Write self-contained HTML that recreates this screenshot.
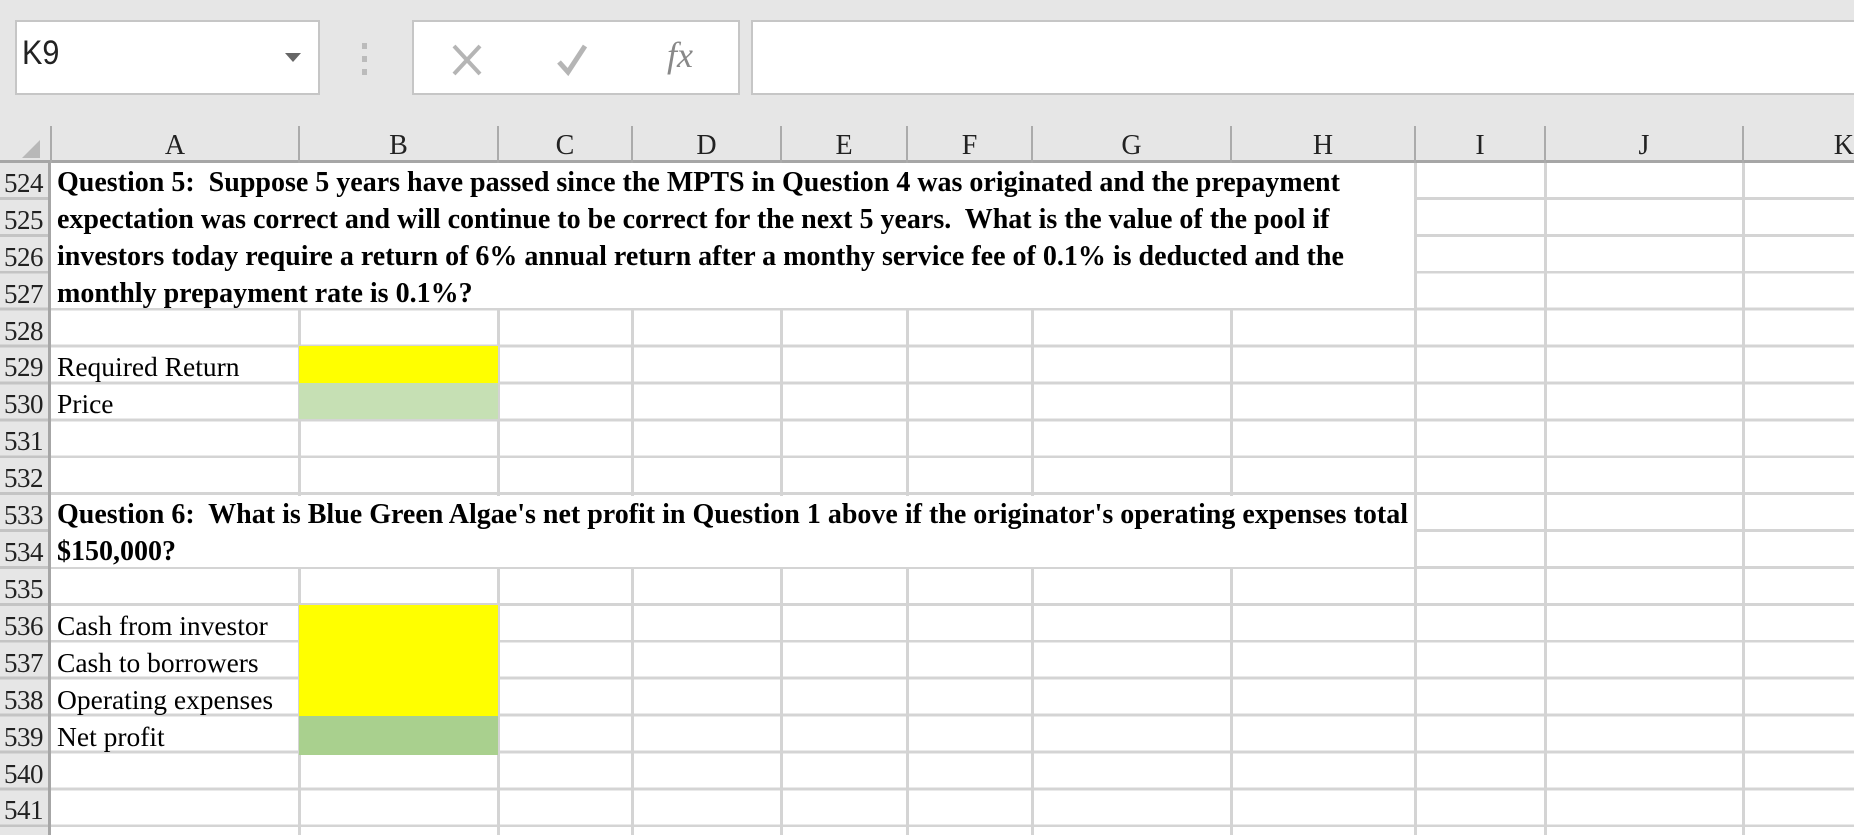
<!DOCTYPE html>
<html><head><meta charset="utf-8"><style>
*{margin:0;padding:0;box-sizing:border-box}
body{width:1854px;height:835px;background:#e6e6e6;position:relative;overflow:hidden;font-family:"Liberation Serif",serif;}
.a{position:absolute}
.box{position:absolute;background:#fff;border:2px solid #c6c6c6}
.v{position:absolute;width:3px;background:#d4d4d4;top:163px;height:672px}
.hv{position:absolute;width:2px;background:#ababab;top:126px;height:37px}
.ch{position:absolute;top:126px;height:37px;line-height:40px;text-align:center;font-size:28px;color:#222}
.rn{position:absolute;left:0;width:51px;height:37px;line-height:40px;font-size:27px;color:#222;padding-left:4px;letter-spacing:-0.5px}
.t{position:absolute;left:57px;height:37px;line-height:40px;font-size:27.5px;color:#000;white-space:nowrap}
.b{font-weight:bold;font-size:28px}
</style></head><body>
<div class="box" style="left:15px;top:20px;width:305px;height:75px"></div>
<div class="a" style="left:22px;top:34px;font-family:'Liberation Sans',sans-serif;font-size:34px;color:#222;transform:scaleX(0.9);transform-origin:left">K9</div>
<div class="a" style="left:285px;top:53px;width:0;height:0;border-left:8px solid transparent;border-right:8px solid transparent;border-top:9px solid #666"></div>
<div class="a" style="left:362px;top:43px;width:5px;height:6px;background:#bbb"></div>
<div class="a" style="left:362px;top:56px;width:5px;height:6px;background:#bbb"></div>
<div class="a" style="left:362px;top:69px;width:5px;height:6px;background:#bbb"></div>
<div class="box" style="left:412px;top:20px;width:328px;height:75px"></div>
<svg class="a" style="left:450px;top:42px" width="36" height="36"><path d="M4 4L30 32M30 4L4 32" stroke="#b5b5b5" stroke-width="4"/></svg>
<svg class="a" style="left:555px;top:42px" width="36" height="36"><path d="M4 20L13 30L30 4" stroke="#b5b5b5" stroke-width="5" fill="none"/></svg>
<div class="a" style="left:667px;top:34px;font-size:36px;font-style:italic;color:#888">fx</div>
<div class="box" style="left:751px;top:20px;width:1110px;height:75px"></div>
<div class="a" style="left:51px;top:163px;width:1803px;height:672px;background:#fff repeating-linear-gradient(to bottom,transparent 0 34px,#d4d4d4 34px 36.9px)"></div>
<div class="v" style="left:298px"></div><div class="v" style="left:497px"></div><div class="v" style="left:631px"></div><div class="v" style="left:780px"></div><div class="v" style="left:906px"></div><div class="v" style="left:1031px"></div><div class="v" style="left:1230px"></div><div class="v" style="left:1414px"></div><div class="v" style="left:1544px"></div><div class="v" style="left:1742px"></div>
<div class="a" style="left:51px;top:163px;width:1363px;height:145px;background:#fff"></div>
<div class="a" style="left:51px;top:496px;width:1363px;height:71px;background:#fff"></div>
<div class="a" style="left:299px;top:346px;width:199px;height:37px;background:#ffff00"></div>
<div class="a" style="left:299px;top:383px;width:199px;height:36px;background:#c6e0b4"></div>
<div class="a" style="left:299px;top:605px;width:199px;height:111px;background:#ffff00"></div>
<div class="a" style="left:299px;top:716px;width:199px;height:39px;background:#a9d08e"></div>
<div class="a" style="left:0;top:126px;width:1854px;height:37px;background:#e6e6e6;border-bottom:3px solid #a6a6a6"></div>
<div class="a" style="left:0;top:163px;width:51px;height:672px;background:#e6e6e6;border-right:3px solid #a6a6a6;background-image:repeating-linear-gradient(to bottom,transparent 0 34px,#c4c4c4 34px 36.9px)"></div>
<div class="a" style="left:22px;top:140px;width:0;height:0;border-left:18px solid transparent;border-bottom:18px solid #b8b8b8"></div>
<div class="hv" style="left:50px"></div><div class="hv" style="left:298px"></div><div class="hv" style="left:497px"></div><div class="hv" style="left:631px"></div><div class="hv" style="left:780px"></div><div class="hv" style="left:906px"></div><div class="hv" style="left:1031px"></div><div class="hv" style="left:1230px"></div><div class="hv" style="left:1414px"></div><div class="hv" style="left:1544px"></div><div class="hv" style="left:1742px"></div>
<div class="ch" style="left:51px;width:248px">A</div>
<div class="ch" style="left:299px;width:199px">B</div>
<div class="ch" style="left:498px;width:134px">C</div>
<div class="ch" style="left:632px;width:149px">D</div>
<div class="ch" style="left:781px;width:126px">E</div>
<div class="ch" style="left:907px;width:125px">F</div>
<div class="ch" style="left:1032px;width:199px">G</div>
<div class="ch" style="left:1231px;width:184px">H</div>
<div class="ch" style="left:1415px;width:130px">I</div>
<div class="ch" style="left:1545px;width:198px">J</div>
<div class="ch" style="left:1743px;width:111px;text-align:right">K</div>
<div class="rn" style="top:163px">524</div><div class="rn" style="top:200px">525</div><div class="rn" style="top:237px">526</div><div class="rn" style="top:274px">527</div><div class="rn" style="top:311px">528</div><div class="rn" style="top:347px">529</div><div class="rn" style="top:384px">530</div><div class="rn" style="top:421px">531</div><div class="rn" style="top:458px">532</div><div class="rn" style="top:495px">533</div><div class="rn" style="top:532px">534</div><div class="rn" style="top:569px">535</div><div class="rn" style="top:606px">536</div><div class="rn" style="top:643px">537</div><div class="rn" style="top:680px">538</div><div class="rn" style="top:717px">539</div><div class="rn" style="top:754px">540</div><div class="rn" style="top:790px">541</div>
<div class="t b" style="top:163px">Question 5:&nbsp; Suppose 5 years have passed since the MPTS in Question 4 was originated and the prepayment</div>
<div class="t b" style="top:200px">expectation was correct and will continue to be correct for the next 5 years.&nbsp; What is the value of the pool if</div>
<div class="t b" style="top:237px">investors today require a return of 6% annual return after a monthy service fee of 0.1% is deducted and the</div>
<div class="t b" style="top:274px">monthly prepayment rate is 0.1%?</div>
<div class="t" style="top:347px">Required Return</div>
<div class="t" style="top:384px">Price</div>
<div class="t b" style="top:495px">Question 6:&nbsp; What is Blue Green Algae's net profit in Question 1 above if the originator's operating expenses total</div>
<div class="t b" style="top:532px">$150,000?</div>
<div class="t" style="top:606px">Cash from investor</div>
<div class="t" style="top:643px">Cash to borrowers</div>
<div class="t" style="top:680px">Operating expenses</div>
<div class="t" style="top:717px">Net profit</div>
</body></html>
